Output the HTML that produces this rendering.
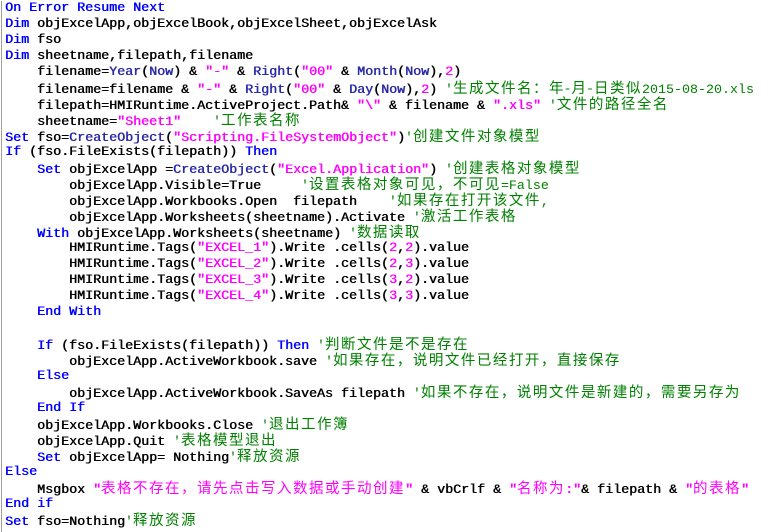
<!DOCTYPE html>
<html><head><meta charset="utf-8"><style>
html,body{margin:0;padding:0;background:#fff;width:771px;height:532px;overflow:hidden}
#w{position:absolute;left:0;top:1px;border-left:1px solid #a0a0a0;margin-left:1px;padding-left:3px;height:531px}
.l{height:16px;line-height:16px;white-space:pre;font-family:"Liberation Mono",monospace;font-size:13.33px;font-weight:normal;color:#000;text-shadow:0.5px 0 0 currentColor;overflow:visible}
.k{color:#0000ff}
.f{color:#2a2aa8}
.s{color:#ff00ff}
.n{color:#ff00ff}
.c{color:#008000;text-shadow:none}
i{font-style:normal;font-family:"Noto Sans CJK SC","WenQuanYi Zen Hei",sans-serif;font-size:14.5px;letter-spacing:1.5px;font-weight:normal;line-height:1;text-shadow:none}
</style></head><body><div id="w">
<div class="l"><span class="k">On Error Resume Next</span></div>
<div class="l"><span class="k">Dim</span> objExcelApp,objExcelBook,objExcelSheet,objExcelAsk</div>
<div class="l"><span class="k">Dim</span> fso</div>
<div class="l"><span class="k">Dim</span> sheetname,filepath,filename</div>
<div class="l">    filename=<span class="f">Year</span>(<span class="f">Now</span>) &amp; <span class="s">"-"</span> &amp; <span class="f">Right</span>(<span class="s">"00"</span> &amp; <span class="f">Month</span>(<span class="f">Now</span>),<span class="n">2</span>)</div>
<div class="l">    filename=filename &amp; <span class="s">"-"</span> &amp; <span class="f">Right</span>(<span class="s">"00"</span> &amp; <span class="f">Day</span>(<span class="f">Now</span>),<span class="n">2</span>) <span class="c">'<i>生成文件名：年-月-日类似</i>2015-08-20.xls</span></div>
<div class="l">    filepath=HMIRuntime.ActiveProject.Path&amp; <span class="s">"\"</span> &amp; filename &amp; <span class="s">".xls"</span> <span class="c">'<i>文件的路径全名</i></span></div>
<div class="l">    sheetname=<span class="s">"Sheet1"</span>    <span class="c">'<i>工作表名称</i></span></div>
<div class="l"><span class="k">Set</span> fso=<span class="f">CreateObject</span>(<span class="s">"Scripting.FileSystemObject"</span>)<span class="c">'<i>创建文件对象模型</i></span></div>
<div class="l"><span class="k">If</span> (fso.FileExists(filepath)) <span class="k">Then</span></div>
<div class="l">    <span class="k">Set</span> objExcelApp =<span class="f">CreateObject</span>(<span class="s">"Excel.Application"</span>) <span class="c">'<i>创建表格对象模型</i></span></div>
<div class="l">        objExcelApp.Visible=True     <span class="c">'<i>设置表格对象可见，不可见</i>=False</span></div>
<div class="l">        objExcelApp.Workbooks.Open  filepath    <span class="c">'<i>如果存在打开该文件</i>,</span></div>
<div class="l">        objExcelApp.Worksheets(sheetname).Activate <span class="c">'<i>激活工作表格</i></span></div>
<div class="l">    <span class="k">With</span> objExcelApp.Worksheets(sheetname) <span class="c">'<i>数据读取</i></span></div>
<div class="l">        HMIRuntime.Tags(<span class="s">"EXCEL_1"</span>).Write .cells(<span class="n">2</span>,<span class="n">2</span>).value</div>
<div class="l">        HMIRuntime.Tags(<span class="s">"EXCEL_2"</span>).Write .cells(<span class="n">2</span>,<span class="n">3</span>).value</div>
<div class="l">        HMIRuntime.Tags(<span class="s">"EXCEL_3"</span>).Write .cells(<span class="n">3</span>,<span class="n">2</span>).value</div>
<div class="l">        HMIRuntime.Tags(<span class="s">"EXCEL_4"</span>).Write .cells(<span class="n">3</span>,<span class="n">3</span>).value</div>
<div class="l">    <span class="k">End With</span></div>
<div class="l"> </div>
<div class="l">    <span class="k">If</span> (fso.FileExists(filepath)) <span class="k">Then</span> <span class="c">'<i>判断文件是不是存在</i></span></div>
<div class="l">        objExcelApp.ActiveWorkbook.save <span class="c">'<i>如果存在，说明文件已经打开，直接保存</i></span></div>
<div class="l">    <span class="k">Else</span></div>
<div class="l">        objExcelApp.ActiveWorkbook.SaveAs filepath <span class="c">'<i>如果不存在，说明文件是新建的，需要另存为</i></span></div>
<div class="l">    <span class="k">End If</span></div>
<div class="l">    objExcelApp.Workbooks.Close <span class="c">'<i>退出工作簿</i></span></div>
<div class="l">    objExcelApp.Quit <span class="c">'<i>表格模型退出</i></span></div>
<div class="l">    <span class="k">Set</span> objExcelApp= Nothing<span class="c">'<i>释放资源</i></span></div>
<div class="l"><span class="k">Else</span></div>
<div class="l">    Msgbox <span class="s">"<i>表格不存在，请先点击写入数据或手动创建</i>"</span> &amp; vbCrlf &amp; <span class="s">"<i>名称为</i>:"</span>&amp; filepath &amp; <span class="s">"<i>的表格</i>"</span></div>
<div class="l"><span class="k">End if</span></div>
<div class="l"><span class="k">Set</span> fso=Nothing<span class="c">'<i>释放资源</i></span></div>
</div></body></html>
